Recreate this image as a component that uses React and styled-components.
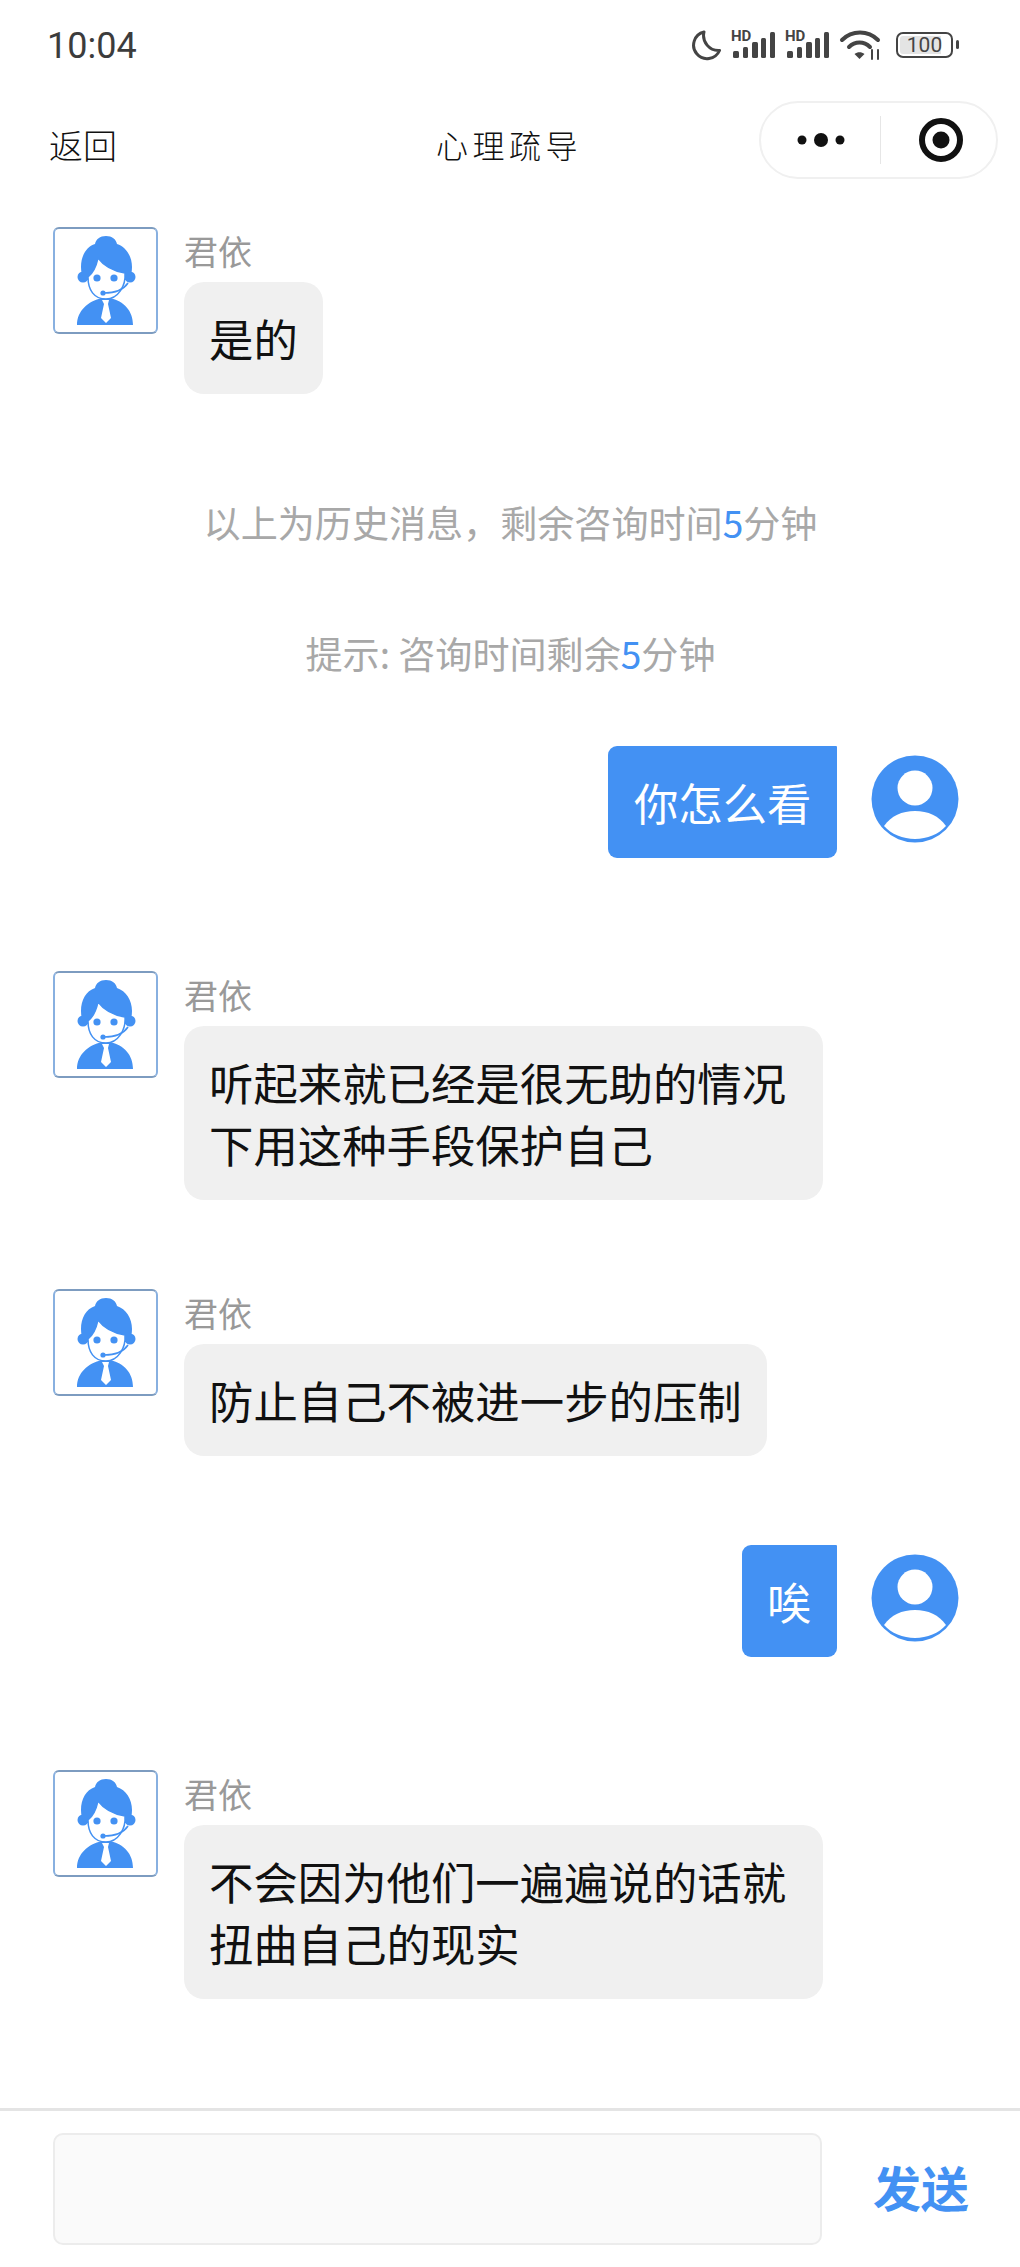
import styled, { createGlobalStyle } from 'styled-components';

const BLUE = '#4391f3';
const CJK = '"Noto Sans CJK SC", "Noto Sans", sans-serif';

const GlobalStyle = createGlobalStyle`
  html, body {
    margin: 0;
    padding: 0;
    background: #fff;
  }
`;

const Page = styled.div`
  width: 1020px;
  height: 2267px;
  display: flex;
  flex-direction: column;
  overflow: hidden;
  background: #fff;
  font-family: ${CJK};
`;

const StatusBar = styled.div`
  height: 90px;
  padding: 0 67px 0 47px;
  box-sizing: border-box;
  display: flex;
  align-items: flex-start;
  justify-content: space-between;
`;

const Clock = styled.span`
  margin-top: 23px;
  font: 400 36px/46px Roboto, sans-serif;
  color: #3c3c3c;
`;

const StatusIcons = styled.div`
  display: flex;
  align-items: center;
  gap: 9px;
  margin-top: 29px;
  height: 32px;
`;

const Battery = styled.div`
  position: relative;
  width: 57px;
  height: 26px;
  margin-left: 4px;
  box-sizing: border-box;
  border: 2.5px solid #444;
  border-radius: 7px;
  display: flex;
  align-items: center;
  justify-content: center;
  font: 400 21px/21px Roboto, sans-serif;
  color: #444;
  background: linear-gradient(90deg, #e4e4e4 82%, #fff 82%);
  background-clip: content-box;
  padding: 2px;

  &::after {
    content: '';
    position: absolute;
    right: -8px;
    top: 6px;
    width: 3px;
    height: 9px;
    border-radius: 2px;
    background: #444;
  }
`;

const NavBar = styled.div`
  position: relative;
  height: 100px;
  padding: 0 22px 0 49px;
  display: flex;
  align-items: center;
  justify-content: space-between;
`;

const BackLink = styled.span`
  margin-top: 8px;
  font-size: 34px;
  font-weight: 300;
  color: #111;
`;

const NavTitle = styled.span`
  position: absolute;
  left: 436px;
  top: 32px;
  font-size: 32px;
  line-height: 44px;
  font-weight: 300;
  letter-spacing: 4.5px;
  color: #111;
`;

const Capsule = styled.div`
  width: 239px;
  height: 78px;
  box-sizing: border-box;
  border: 2px solid #f0f0f0;
  border-radius: 39px;
  display: flex;
  align-items: center;
`;

const MenuPart = styled.div`
  width: 119px;
  display: flex;
  align-items: center;
  justify-content: center;
`;

const ClosePart = styled.div`
  flex: 1;
  display: flex;
  align-items: center;
  justify-content: center;
  padding-left: 5px;
`;

const CapsuleDivider = styled.div`
  width: 1px;
  height: 48px;
  background: #e6e6e6;
`;

const Messages = styled.div`
  flex: 1;
  padding: 37px 61px 0 53px;
`;

const BotRow = styled.div`
  display: flex;
  gap: 26px;
  margin-bottom: 89px;
`;

const BotAvatar = styled.div`
  width: 105px;
  height: 107px;
  flex: none;
  box-sizing: border-box;
  border: 2px solid #88b0e0;
  border-top-color: #7d9cc0;
  border-bottom-color: #7d9cc0;
  border-radius: 6px;
  background: #fff;
`;

const BotBody = styled.div`
  display: flex;
  flex-direction: column;
  align-items: flex-start;
`;

const Name = styled.div`
  height: 55px;
  font-size: 34px;
  line-height: 48px;
  color: #999;
`;

const BotBubble = styled.div`
  max-width: 639px;
  box-sizing: border-box;
  padding: 25px;
  border-radius: 20px;
  background: #f0f0f0;
  font-size: 44.4px;
  line-height: 62px;
  color: #111;
`;

const Hint = styled.div`
  height: 50px;
  margin: ${p => p.$top}px 0 ${p => p.$bottom}px;
  padding-left: 9px;
  text-align: center;
  font-size: 37.1px;
  line-height: 50px;
  color: #a8a8a8;

  b {
    font-weight: 400;
    color: ${BLUE};
  }
`;

const UserRow = styled.div`
  display: flex;
  justify-content: flex-end;
  align-items: flex-start;
  gap: 34px;
  margin-bottom: 113px;
`;

const UserBubble = styled.div`
  box-sizing: border-box;
  padding: 25px 25.5px;
  border-radius: 9px 1px 9px 9px;
  background: ${BLUE};
  font-size: 44.4px;
  line-height: 62px;
  font-weight: 400;
  color: #fff;
`;

const UserAvatarWrap = styled.div`
  margin-top: 9px;
  width: 88px;
  height: 88px;
`;

const Footer = styled.div`
  height: 159px;
  box-sizing: border-box;
  padding: 22px 51px 22px 53px;
  border-top: 3px solid #e4e4e4;
  display: flex;
  align-items: stretch;
  justify-content: space-between;
`;

const InputBox = styled.div`
  width: 769px;
  box-sizing: border-box;
  border: 2px solid #ececec;
  border-radius: 10px;
  background: #fafafa;
`;

const SendButton = styled.span`
  align-self: center;
  margin-bottom: 6px;
  font-size: 48px;
  font-weight: 700;
  line-height: 60px;
  color: ${BLUE};
`;

const Moon = () => (
  <svg width="32" height="32" viewBox="0 0 32 32" fill="none">
    <path d="M14 3a13.5 13.5 0 1 0 15.5 18.5A15 15 0 0 1 14 3z" stroke="#444" strokeWidth="3" strokeLinejoin="round" />
  </svg>
);

const Signal = () => (
  <svg width="45" height="42" viewBox="0 -6 45 42" fill="#444">
    <text x="0" y="11" fontFamily="Roboto, sans-serif" fontWeight="700" fontSize="15">HD</text>
    <rect x="2" y="21" width="6" height="7" rx="1.5" />
    <rect x="12" y="17" width="5" height="11" rx="1.5" />
    <rect x="21" y="12" width="6" height="16" rx="1.5" />
    <rect x="30" y="8" width="5" height="20" rx="1.5" />
    <rect x="39" y="2" width="5" height="26" rx="1.5" />
  </svg>
);

const Wifi = () => (
  <svg width="44" height="32" viewBox="0 0 44 32" fill="none" stroke="#444" strokeWidth="4" strokeLinecap="round">
    <path d="M3 11C13 1 29 1 39 11" />
    <path d="M10 18C16 12 25 12 31 18" />
    <path d="M20.5 30l-5-5c3-2.5 7-2.5 10 0z" fill="#444" stroke="none" />
    <path d="M33 21v9M39 21v9" strokeWidth="2" />
  </svg>
);

const Dots = () => (
  <svg width="48" height="16" viewBox="0 0 48 16" fill="#111">
    <circle cx="5" cy="8" r="4.5" />
    <circle cx="24" cy="8" r="7" />
    <circle cx="43" cy="8" r="4.5" />
  </svg>
);

const Target = () => (
  <svg width="46" height="46" viewBox="0 0 46 46">
    <circle cx="23" cy="23" r="19" fill="none" stroke="#111" strokeWidth="6" />
    <circle cx="23" cy="23" r="8.5" fill="#111" />
  </svg>
);

const AgentFigure = () => (
  <svg width="101" height="103" viewBox="2 2 101 103" fill={BLUE}>
    <circle cx="30" cy="50" r="5.5" />
    <circle cx="77" cy="50" r="5.5" />
    <path d="M53 9c-6 0-10 3-11 8-9 3-14 12-14 23 0 5 1 9 3 13h45c2-4 3-8 3-13 0-11-6-20-15-23-1-5-5-8-11-8z" />
    <path d="M35 50c5-4 8-10 10-19 6 8 15 13 27 15 1 13-7 26-19 26S35 63 35 50z" fill="#fff" stroke={BLUE} strokeWidth="1.5" />
    <circle cx="44" cy="51" r="3.6" />
    <circle cx="61" cy="51" r="3.6" />
    <path d="M24 98c0-14 11-24 25-27 2 1 6 1 8 0 14 3 23 13 23 27z" />
    <path d="M49 73h7l-1 4 3 14-5 5-5-5 3-14z" fill="#fff" />
    <path d="M75 56c-4 6-12 10-24 10" fill="none" stroke={BLUE} strokeWidth="1.6" />
    <circle cx="50" cy="66" r="2.6" />
  </svg>
);

const UserFigure = () => (
  <svg width="88" height="88" viewBox="0 0 88 88">
    <circle cx="44" cy="44" r="43.5" fill={BLUE} />
    <circle cx="44" cy="33" r="17.5" fill="#fff" />
    <path d="M13 71c7-10 18-15 31-15s24 5 31 15c-7 8-19 13-31 13s-24-5-31-13z" fill="#fff" />
  </svg>
);

function Bot({ children }) {
  return (
    <BotRow>
      <BotAvatar>
        <AgentFigure />
      </BotAvatar>
      <BotBody>
        <Name>君依</Name>
        <BotBubble>{children}</BotBubble>
      </BotBody>
    </BotRow>
  );
}

function User({ children }) {
  return (
    <UserRow>
      <UserBubble>{children}</UserBubble>
      <UserAvatarWrap>
        <UserFigure />
      </UserAvatarWrap>
    </UserRow>
  );
}

export default function App() {
  return (
    <Page>
      <GlobalStyle />
      <StatusBar>
        <Clock>10:04</Clock>
        <StatusIcons>
          <Moon />
          <Signal />
          <Signal />
          <Wifi />
          <Battery>100</Battery>
        </StatusIcons>
      </StatusBar>
      <NavBar>
        <BackLink>返回</BackLink>
        <NavTitle>心理疏导</NavTitle>
        <Capsule>
          <MenuPart><Dots /></MenuPart>
          <CapsuleDivider />
          <ClosePart><Target /></ClosePart>
        </Capsule>
      </NavBar>
      <Messages>
        <Bot>是的</Bot>
        <Hint $top={103} $bottom={81}>以上为历史消息，剩余咨询时间<b>5</b>分钟</Hint>
        <Hint $top={0} $bottom={68}>提示: 咨询时间剩余<b>5</b>分钟</Hint>
        <User>你怎么看</User>
        <Bot>听起来就已经是很无助的情况下用这种手段保护自己</Bot>
        <Bot>防止自己不被进一步的压制</Bot>
        <User>唉</User>
        <Bot>不会因为他们一遍遍说的话就扭曲自己的现实</Bot>
      </Messages>
      <Footer>
        <InputBox />
        <SendButton>发送</SendButton>
      </Footer>
    </Page>
  );
}
